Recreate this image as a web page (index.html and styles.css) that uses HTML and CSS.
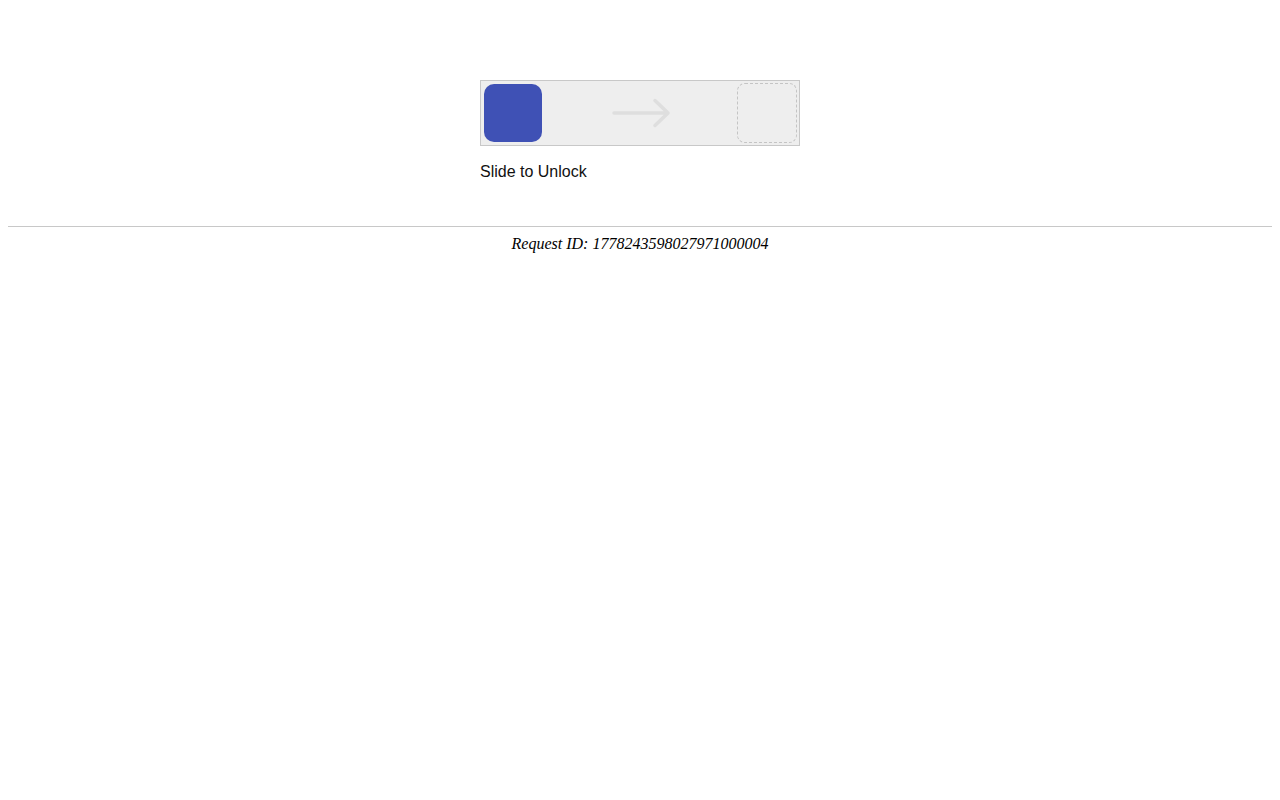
FILE: index.html
```html
<!DOCTYPE html>
<html>
<head>
<meta charset="utf-8">
<title>Slide to Unlock</title>
<link rel="stylesheet" href="styles.css">
</head>
<body>
<div class="main">
  <div class="track">
    <div class="knob"></div>
    <svg class="arrow" width="60" height="32" viewBox="0 0 60 32">
      <path d="M3 16 H57 M44 3.5 L57 16 L44 28.5" fill="none" stroke="#dedede" stroke-width="3.5" stroke-linecap="round" stroke-linejoin="round"/>
    </svg>
    <div class="target"></div>
  </div>
  <p class="label">Slide to Unlock</p>
</div>
<hr class="rule">
<p class="request">Request ID: 1778243598027971000004</p>
</body>
</html>
```
FILE: styles.css
```css
body {
  margin: 8px;
  background: #fff;
  font-family: "Times New Roman", "Liberation Serif", serif;
}
.main {
  width: 320px;
  margin: 72px auto 0;
  padding-bottom: 45px;
}
.track {
  box-sizing: border-box;
  width: 320px;
  height: 66px;
  border: 1px solid #c8c8c8;
  background: #eeeeee;
  display: flex;
  align-items: center;
  padding: 0 2px 0 3px;
}
.knob {
  width: 58px;
  height: 58px;
  border-radius: 10px;
  background: #3f51b5;
  flex: none;
}
.arrow {
  display: block;
  margin-left: 69px;
  flex: none;
}
.target {
  box-sizing: border-box;
  width: 60px;
  height: 60px;
  border: 1px dashed #c4c4c4;
  border-radius: 8px;
  margin-left: auto;
  flex: none;
}
.label {
  margin: 17px 0 0;
  font-family: "Liberation Sans", Arial, sans-serif;
  font-size: 16px;
  color: #111;
}
.rule {
  margin: 0;
  border: 0;
  border-top: 1px solid #c8c8c8;
  height: 0;
}
.request {
  margin: 8px 0;
  text-align: center;
  font-style: italic;
  font-size: 16px;
  font-family: "Liberation Serif", "Times New Roman", serif;
}
```
